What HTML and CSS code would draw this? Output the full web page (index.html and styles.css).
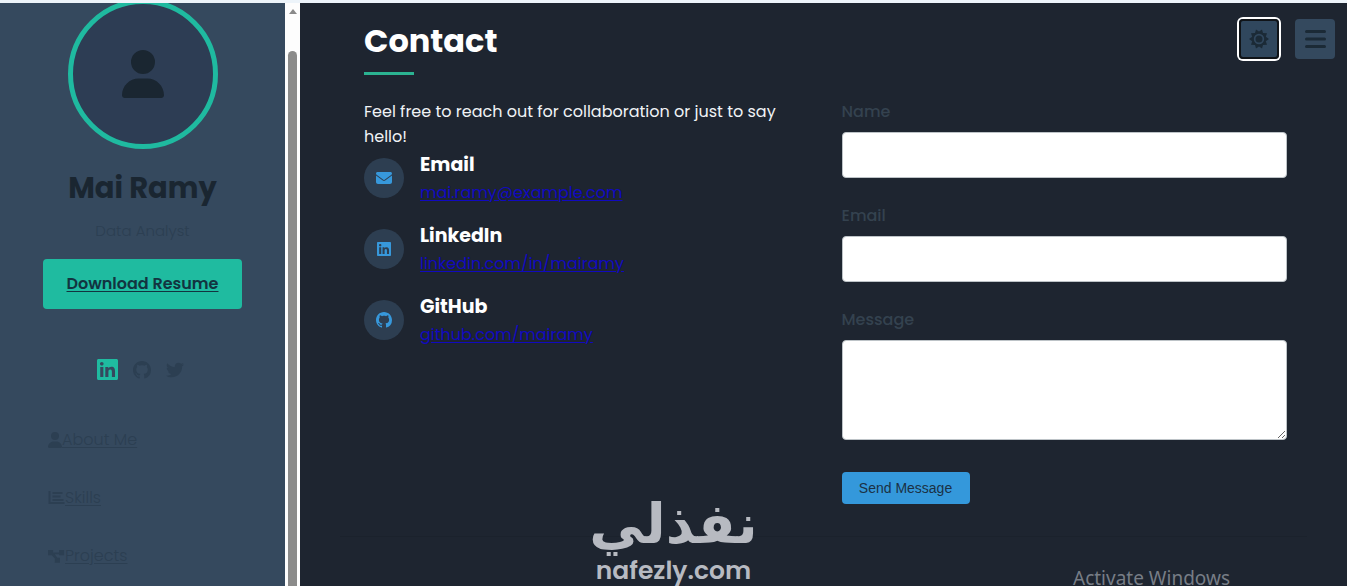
FILE: index.html
```
<!DOCTYPE html>
<html lang="en">
<head>
<meta charset="utf-8">
<meta name="viewport" content="width=device-width, initial-scale=1">
<title>Mai Ramy - Contact</title>
<link rel="stylesheet" href="styles.css">
</head>
<body>
<svg class="symbols" aria-hidden="true">
  <symbol id="user" viewBox="0 0 448 512"><path d="M224 256a128 128 0 1 0 0-256 128 128 0 1 0 0 256zm-45.7 48C79.8 304 0 383.8 0 482.3C0 498.7 13.3 512 29.7 512H418.3c16.4 0 29.7-13.3 29.7-29.7C448 383.8 368.2 304 269.7 304H178.3z"/></symbol>
  <symbol id="linkedin" viewBox="0 32 448 448"><path d="M416 32H31.9C14.3 32 0 46.5 0 64.3v383.4C0 465.5 14.3 480 31.9 480H416c17.6 0 32-14.5 32-32.3V64.3c0-17.8-14.4-32.3-32-32.3zM135.4 416H69V202.2h66.5V416zm-33.2-243c-21.3 0-38.5-17.3-38.5-38.5S80.9 96 102.2 96c21.2 0 38.5 17.3 38.5 38.5 0 21.3-17.2 38.5-38.5 38.5zm282.1 243h-66.4V312c0-24.8-.5-56.7-34.5-56.7-34.6 0-39.9 27-39.9 54.9V416h-66.4V202.2h63.7v29.2h.9c8.9-16.8 30.6-34.5 62.9-34.5 67.2 0 79.7 44.3 79.7 101.9V416z"/></symbol>
  <symbol id="github" viewBox="0 0 16 16"><path d="M8 0C3.58 0 0 3.58 0 8c0 3.54 2.29 6.53 5.47 7.59.4.07.55-.17.55-.38 0-.19-.01-.82-.01-1.49-2.01.37-2.53-.49-2.69-.94-.09-.23-.48-.94-.82-1.13-.28-.15-.68-.52-.01-.53.63-.01 1.08.58 1.23.82.72 1.21 1.87.87 2.33.66.07-.52.28-.87.51-1.07-1.78-.2-3.64-.89-3.64-3.95 0-.87.31-1.59.82-2.15-.08-.2-.36-1.02.08-2.12 0 0 .67-.21 2.2.82.64-.18 1.32-.27 2-.27s1.36.09 2 .27c1.53-1.04 2.2-.82 2.2-.82.44 1.1.16 1.92.08 2.12.51.56.82 1.27.82 2.15 0 3.07-1.87 3.75-3.65 3.95.29.25.54.73.54 1.48 0 1.07-.01 1.93-.01 2.2 0 .21.15.46.55.38A8.01 8.01 0 0 0 16 8c0-4.42-3.58-8-8-8z"/></symbol>
  <symbol id="twitter" viewBox="0 0 512 512"><path d="M459.37 151.716c.325 4.548.325 9.097.325 13.645 0 138.72-105.583 298.558-298.558 298.558-59.452 0-114.68-17.219-161.137-47.106 8.447.974 16.568 1.299 25.34 1.299 49.055 0 94.213-16.568 130.274-44.832-46.132-.975-84.792-31.188-98.112-72.772 6.498.974 12.995 1.624 19.818 1.624 9.421 0 18.843-1.3 27.614-3.573-48.081-9.747-84.143-51.98-84.143-102.985v-1.299c13.969 7.797 30.214 12.67 47.431 13.319-28.264-18.843-46.781-51.005-46.781-87.391 0-19.492 5.197-37.36 14.294-52.954 51.655 63.675 129.3 105.258 216.365 109.807-1.624-7.797-2.599-15.918-2.599-24.04 0-57.828 46.782-104.934 104.934-104.934 30.213 0 57.502 12.67 76.67 33.137 23.715-4.548 46.456-13.32 66.599-25.34-7.798 24.366-24.366 44.833-46.132 57.827 21.117-2.273 41.584-8.122 60.426-16.243-14.292 20.791-32.161 39.308-52.628 54.253z"/></symbol>
  <symbol id="envelope" viewBox="0 64 512 384"><path d="M48 64C21.5 64 0 85.500 0 112c0 15.100 7.100 29.300 19.200 38.400L236.800 313.600c11.400 8.500 27 8.500 38.400 0L492.800 150.400c12.100-9.100 19.200-23.300 19.200-38.400c0-26.500-21.500-48-48-48H48zM0 176V384c0 35.300 28.700 64 64 64H448c35.300 0 64-28.700 64-64V176L294.400 339.200c-22.800 17.100-54 17.100-76.800 0L0 176z"/></symbol>
  <symbol id="chart" viewBox="0 0 16 16"><path d="M0 1h2v11h14v2H0zM4 2h10v2H4zM4 5.500h8v2H4zM4 9h11v2H4z"/></symbol>
  <symbol id="diagram" viewBox="0 0 20 16"><path d="M0 1h6v3h7V1h6v6h-6V6H8l3 4h3v6H8v-5L4.500 7H0z"/></symbol>
  <symbol id="sun" viewBox="0 0 20 20"><path fill-rule="evenodd" d="M7 .5l3 2 3-2 1 3.500 4 .2-1.200 3.500L20 10l-3.200 2.300L18 15.800l-4 .2-1 3.500-3-2-3 2L6 16l-4-.2 1.200-3.500L0 10l3.200-2.300L2 4.200 6 4zM10 4.800a5.200 5.200 0 1 0 0 10.400 5.200 5.200 0 1 0 0-10.400zM10 6.500a3.500 3.500 0 1 1 0 7 3.500 3.500 0 1 1 0-7z"/></symbol>
  <symbol id="bars" viewBox="0 0 21 18"><path d="M1.500 0h18a1.500 1.500 0 0 1 0 3h-18a1.500 1.500 0 0 1 0-3zM1.500 7.500h18a1.500 1.500 0 0 1 0 3h-18a1.500 1.500 0 0 1 0-3zM1.500 15h18a1.500 1.500 0 0 1 0 3h-18a1.500 1.500 0 0 1 0-3z"/></symbol>
</svg>
<div class="layout">
  <aside class="sidebar">
    <div class="profile">
      <div class="avatar"><svg class="avatar-icon" aria-hidden="true"><use href="#user"/></svg></div>
      <h1 class="name">Mai Ramy</h1>
      <p class="role">Data Analyst</p>
      <a class="resume" href="#resume">Download Resume</a>
      <div class="social">
        <a class="social-link active" href="#linkedin-profile" aria-label="LinkedIn"><svg class="icon-lg"><use href="#linkedin"/></svg></a>
        <a class="social-link" href="#github-profile" aria-label="GitHub"><svg class="icon-md"><use href="#github"/></svg></a>
        <a class="social-link" href="#twitter-profile" aria-label="Twitter"><svg class="icon-md"><use href="#twitter"/></svg></a>
      </div>
      <nav class="nav">
        <a class="nav-link" href="#about"><svg class="nav-icon"><use href="#user"/></svg>About Me</a>
        <a class="nav-link" href="#skills"><svg class="nav-icon wide"><use href="#chart"/></svg>Skills</a>
        <a class="nav-link" href="#projects"><svg class="nav-icon wide"><use href="#diagram"/></svg>Projects</a>
      </nav>
    </div>
    <div class="track" aria-hidden="true"><div class="arrow"></div><div class="thumb"></div></div>
  </aside>
  <main class="main">
    <section class="contact">
      <h2 class="title">Contact</h2>
      <div class="columns">
        <div class="info">
          <p class="intro">Feel free to reach out for collaboration or just to say hello!</p>
          <div class="method">
            <span class="badge"><svg class="badge-icon mail"><use href="#envelope"/></svg></span>
            <div><h3 class="method-name">Email</h3><a class="method-link" href="mailto:mai.ramy@example.com">mai.ramy@example.com</a></div>
          </div>
          <div class="method">
            <span class="badge"><svg class="badge-icon square"><use href="#linkedin"/></svg></span>
            <div><h3 class="method-name">LinkedIn</h3><a class="method-link" href="#linkedin-profile">linkedin.com/in/mairamy</a></div>
          </div>
          <div class="method">
            <span class="badge"><svg class="badge-icon"><use href="#github"/></svg></span>
            <div><h3 class="method-name">GitHub</h3><a class="method-link" href="#github-profile">github.com/mairamy</a></div>
          </div>
        </div>
        <form class="form">
          <div class="field"><label class="label" for="name">Name</label><input class="input" id="name" type="text"></div>
          <div class="field"><label class="label" for="email">Email</label><input class="input" id="email" type="email"></div>
          <div class="field"><label class="label" for="message">Message</label><textarea class="input area" id="message"></textarea></div>
          <button class="send" type="button">Send Message</button>
        </form>
      </div>
    </section>
    <div class="rule"></div>
  </main>
</div>
<div class="tools">
  <button class="tool focused" type="button" aria-label="Toggle theme"><svg class="sun-icon"><use href="#sun"/></svg></button>
  <button class="tool" type="button" aria-label="Menu"><svg class="bars-icon"><use href="#bars"/></svg></button>
</div>
<div class="watermark"><span class="mark-ar" lang="ar" dir="rtl">نفذلي</span><span class="mark-en">nafezly.com</span></div>
<div class="activate">Activate Windows</div>
</body>
</html>
```
FILE: styles.css
```
* { box-sizing: border-box; }
body {
  margin: 0;
  height: 100vh;
  overflow: hidden;
  position: relative;
  border-top: 3px solid #edf4fa;
  background: #1e2530;
  color: #ecf0f1;
  font: 16px/25px Poppins, Inter, "Open Sans", sans-serif;
}
h1, h2, h3, p { margin: 0; }
svg { display: block; fill: currentColor; }
.symbols { display: none; }
.layout { display: flex; height: 100%; }

.sidebar { display: flex; flex: 0 0 300px; background: #35495e; overflow: hidden; }
.profile { flex: 1; display: flex; flex-direction: column; align-items: center; color: #1a2631; }
.avatar {
  display: flex; align-items: center; justify-content: center; flex: none;
  width: 150px; height: 150px; margin-top: -4px;
  border: 5px solid #1fbaa0; border-radius: 50%; background: #2d3d54;
}
.avatar-icon { width: 42px; height: 48px; }
.name { margin-top: 20px; font-size: 29px; line-height: 38px; font-weight: 700; }
.role { margin-top: 12px; font-size: 15px; line-height: 24px; font-weight: 300; color: #2c3f52; }
.resume {
  margin-top: 16px; padding: 12px 24px; min-width: 199px; text-align: center;
  border-radius: 4px; background: #1fbba0; color: #123440; font-weight: 600;
  line-height: 26px; text-underline-offset: 2px;
}
.social { display: flex; align-items: center; gap: 15px; margin: 50px 4px 0 0; height: 24px; }
.social-link { color: #2c3f52; }
.social-link.active { color: #1fbba0; }
.icon-lg { width: 21px; height: 21px; }
.icon-md { width: 18px; height: 18px; }
.nav { align-self: stretch; display: flex; flex-direction: column; gap: 32px; padding: 47px 48px; }
.nav-link { display: flex; align-items: center; color: #2c3f52; font-weight: 300; line-height: 26px; text-underline-offset: 2px; }
.nav-icon { width: 14px; height: 16px; }
.nav-icon.wide { width: 17px; }

.track { flex: 0 0 15px; display: flex; flex-direction: column; align-items: center; padding-top: 6px; background: #fdfdfd; }
.arrow { border: 4px solid transparent; border-top-width: 0; border-bottom: 5px solid #8a8a8a; }
.thumb { flex: 1; width: 9px; margin-top: 37px; border-radius: 5px 5px 0 0; background: #8b8b8a; }

.main { flex: 1; padding: 0 40px; }
.contact { padding: 14px 20px 0 24px; }
.title { font-size: 32px; line-height: 48px; font-weight: 700; color: #fff; }
.title::after { content: ""; display: block; width: 50px; height: 3px; margin-top: 7px; background: #2bb391; }
.columns { display: grid; grid-template-columns: 1fr 1fr; gap: 32px; margin-top: 24px; }
.info { min-width: 0; }
.intro { color: #f0f3f6; }
.method { display: flex; gap: 16px; height: 56px; margin-bottom: 15px; padding-top: 4px; }
.badge {
  display: flex; align-items: center; justify-content: center;
  width: 40px; height: 40px; margin-top: 5px; border-radius: 50%;
  background: #2d3e51; color: #3798db;
}
.badge-icon { width: 16px; height: 16px; }
.badge-icon.mail { height: 12px; }
.badge-icon.square { width: 14px; height: 14px; }
.method-name { font-size: 19px; line-height: 24px; font-weight: 700; color: #fff; }
.method-link { display: block; line-height: 32px; color: #1109c0; text-underline-offset: 2px; }

.label { display: block; line-height: 25px; font-weight: 500; color: #34424f; }
.field { margin-bottom: 25px; }
.input { display: block; width: 100%; height: 46px; margin-top: 8px; padding: 12px; border: 1px solid #bdc3c7; border-radius: 4px; background: #fff; font: inherit; }
.area { height: 100px; resize: vertical; }
.send {
  display: block; margin-top: 32px; width: 128px; height: 32px; padding: 0;
  border: 0; border-radius: 4px; background: #3498db; color: #1b3145;
  font: 14px/20px "Liberation Sans", Arial, sans-serif;
}
.rule { height: 1px; margin-top: 32px; background: #1b222c; }

.tools { position: absolute; top: 16px; right: 12px; display: flex; gap: 16px; }
.tool {
  display: flex; align-items: center; justify-content: center;
  width: 40px; height: 40px; padding: 0; border: 0; border-radius: 4px;
  background: #34495e; color: #1b2a36;
}
.tool.focused { box-shadow: inset 0 0 0 2px #101418, 0 0 0 2px #fff; background: #30475d; }
.sun-icon { width: 20px; height: 20px; }
.bars-icon { width: 21px; height: 18px; }

.watermark {
  position: absolute; left: 50%; bottom: 0; transform: translateX(-50%);
  display: flex; flex-direction: column; align-items: center; color: #b7bac1;
}
.mark-ar { font: 700 55px/64px "DejaVu Sans", sans-serif; }
.mark-en { font-size: 25px; line-height: 30px; font-weight: 600; }
.activate { position: absolute; right: 117px; bottom: 0; color: #777d86; font: 19px/16px "Noto Sans", "Open Sans", sans-serif; }
```
